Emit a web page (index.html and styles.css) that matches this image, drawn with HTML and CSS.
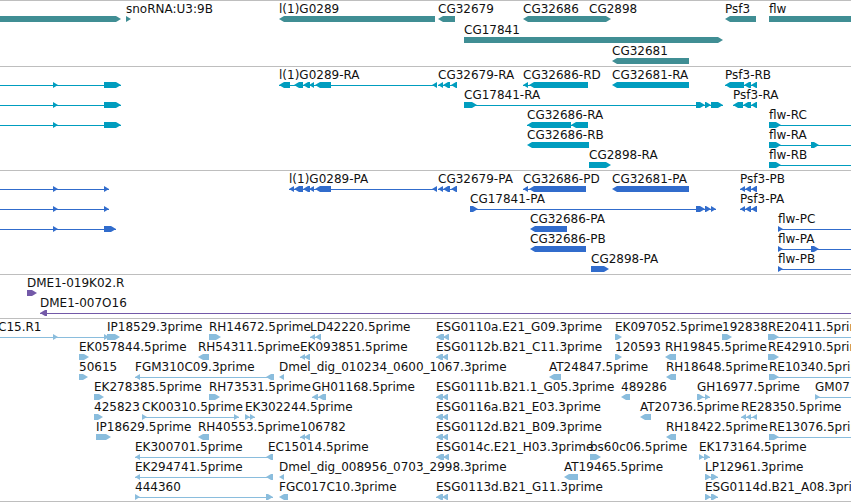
FILE: index.html
```
<!DOCTYPE html>
<html lang="en">
<head>
    <meta charset="UTF-8">
    <meta name="viewport" content="width=device-width, initial-scale=1.0">
    <title>Genome Map</title>
    <link rel="stylesheet" href="styles.css">
</head>
<body>
    <main class="map" id="map"></main>

    <script>
        // feature: [label, strand, [start, end, start, end, ...]]
        const tracks = [
            {
                type: 'gene',
                rows: [
                    [
                        ['', '+', [-10, 121]],
                        ['snoRNA:U3:9B', '+', [126, 131]],
                        ['l(1)G0289', '-', [279, 435]],
                        ['CG32679', '-', [438, 455]],
                        ['CG32686', '-', [523, 589]],
                        ['CG2898', '+', [589, 611]],
                        ['Psf3', '-', [725, 756]],
                        ['flw', '+', [769, 900]]
                    ],
                    [
                        ['CG17841', '+', [464, 723]]
                    ],
                    [
                        ['CG32681', '-', [612, 689]]
                    ]
                ]
            },
            {
                type: 'transcript',
                rows: [
                    [
                        ['', '+', [-10, -5, 53, 58, 104, 121]],
                        ['l(1)G0289-RA', '-', [279, 290, 294, 303, 303, 310, 309, 314, 315, 331, 432, 437]],
                        ['CG32679-RA', '-', [438, 443, 443, 450, 451, 457]],
                        ['CG32686-RD', '-', [523, 528, 529, 588]],
                        ['CG32681-RA', '-', [612, 689]],
                        ['Psf3-RB', '-', [725, 744, 744, 751, 751, 757]]
                    ],
                    [
                        ['', '+', [-10, -5, 53, 58, 104, 121]],
                        ['CG17841-RA', '+', [464, 477, 696, 705, 705, 711, 711, 723]],
                        ['Psf3-RA', '-', [733, 743, 743, 751, 751, 757]]
                    ],
                    [
                        ['', '+', [-10, -5, 53, 58, 104, 121]],
                        ['CG32686-RA', '-', [527, 571, 571, 588]],
                        ['flw-RC', '+', [769, 781, 900, 910]]
                    ],
                    [
                        ['CG32686-RB', '-', [527, 589]],
                        ['flw-RA', '+', [769, 781, 811, 819, 900, 910]]
                    ],
                    [
                        ['CG2898-RA', '+', [589, 611]],
                        ['flw-RB', '+', [769, 781, 900, 910]]
                    ]
                ]
            },
            {
                type: 'cds',
                rows: [
                    [
                        ['', '+', [-10, -5, 53, 58, 104, 109]],
                        ['l(1)G0289-PA', '-', [289, 294, 294, 303, 303, 310, 309, 314, 315, 331, 432, 437]],
                        ['CG32679-PA', '-', [438, 443, 443, 450, 451, 457]],
                        ['CG32686-PD', '-', [523, 528, 529, 586]],
                        ['CG32681-PA', '-', [612, 689]],
                        ['Psf3-PB', '-', [740, 745, 745, 751, 751, 757]]
                    ],
                    [
                        ['', '+', [-10, -5, 53, 58, 104, 109]],
                        ['CG17841-PA', '+', [470, 478, 696, 705, 705, 711, 711, 716]],
                        ['Psf3-PA', '-', [740, 745, 745, 751, 751, 757]]
                    ],
                    [
                        ['', '+', [-10, -5, 53, 58, 104, 116]],
                        ['CG32686-PA', '-', [530, 567]],
                        ['flw-PC', '+', [778, 783, 900, 910]]
                    ],
                    [
                        ['CG32686-PB', '-', [530, 586]],
                        ['flw-PA', '+', [778, 783, 811, 819, 900, 910]]
                    ],
                    [
                        ['CG2898-PA', '+', [591, 609]],
                        ['flw-PB', '+', [778, 783, 900, 910]]
                    ]
                ]
            },
            {
                type: 'clone',
                rows: [
                    [
                        ['DME1-019K02.R', '+', [27, 37]]
                    ],
                    [
                        ['DME1-007O16', '-', [40, 47, 900, 910]]
                    ]
                ]
            },
            {
                type: 'est',
                rows: [
                    [
                        ['C15.R1', '+', [-2, -1, 53, 58, 104, 109]],
                        ['IP18529.3prime', '+', [107, 120]],
                        ['RH14672.5prime', '+', [209, 221]],
                        ['LD42220.5prime', '-', [310, 315, 315, 321]],
                        ['ESG0110a.E21_G09.3prime', '-', [436, 444, 443, 449]],
                        ['EK097052.5prime', '+', [615, 622]],
                        ['192838', '+', [722, 732]],
                        ['RE20411.5prime', '+', [768, 779, 900, 910]]
                    ],
                    [
                        ['EK057844.5prime', '+', [79, 89]],
                        ['RH54311.5prime', '-', [198, 209]],
                        ['EK093851.5prime', '-', [300, 305, 304, 310]],
                        ['ESG0112b.B21_C11.3prime', '-', [436, 443, 442, 448]],
                        ['120593', '+', [615, 622]],
                        ['RH19845.5prime', '-', [665, 676]],
                        ['RE42910.5prime', '+', [768, 779]]
                    ],
                    [
                        ['50615', '+', [79, 88]],
                        ['FGM310C09.3prime', '-', [135, 140, 266, 274]],
                        ['Dmel_dig_010234_0600_1067.3prime', '-', [279, 284]],
                        ['AT24847.5prime', '-', [549, 561]],
                        ['RH18648.5prime', '-', [666, 676]],
                        ['RE10340.5prime', '+', [769, 779, 900, 910]]
                    ],
                    [
                        ['EK278385.5prime', '+', [94, 104]],
                        ['RH73531.5prime', '+', [209, 220]],
                        ['GH01168.5prime', '-', [312, 318, 318, 326]],
                        ['ESG0111b.B21.1_G05.3prime', '-', [436, 443, 442, 448]],
                        ['489286', '-', [621, 630]],
                        ['GH16977.5prime', '+', [697, 704, 705, 710]],
                        ['GM07', '+', [815, 820, 900, 910]]
                    ],
                    [
                        ['425823', '+', [94, 103]],
                        ['CK00310.5prime', '+', [142, 147, 234, 239]],
                        ['EK302244.5prime', '+', [245, 250, 250, 255]],
                        ['ESG0116a.B21_E03.3prime', '-', [436, 443, 442, 448]],
                        ['AT20736.5prime', '-', [640, 651]],
                        ['RE28350.5prime', '-', [741, 746, 746, 751, 752, 757]]
                    ],
                    [
                        ['IP18629.5prime', '+', [96, 111]],
                        ['RH40553.5prime', '-', [198, 209]],
                        ['106782', '-', [300, 305, 304, 310]],
                        ['ESG0112d.B21_B09.3prime', '-', [436, 443, 442, 448]],
                        ['RH18422.5prime', '-', [666, 676]],
                        ['RE13076.5prime', '+', [769, 779, 900, 910]]
                    ],
                    [
                        ['EK300701.5prime', '-', [135, 140, 266, 273]],
                        ['EC15014.5prime', '-', [268, 273]],
                        ['ESG014c.E21_H03.3prime', '-', [436, 444, 443, 449]],
                        ['bs60c06.5prime', '+', [590, 601]],
                        ['EK173164.5prime', '+', [699, 704, 704, 710]]
                    ],
                    [
                        ['EK294741.5prime', '-', [135, 140, 266, 273]],
                        ['Dmel_dig_008956_0703_2998.3prime', '-', [279, 284]],
                        ['AT19465.5prime', '-', [564, 578]],
                        ['LP12961.3prime', '+', [705, 711, 711, 718]]
                    ],
                    [
                        ['444360', '+', [135, 140, 266, 273]],
                        ['FGC017C10.3prime', '-', [279, 288]],
                        ['ESG0113d.B21_G11.3prime', '-', [436, 443, 442, 448]],
                        ['ESG0114d.B21_A08.3prime', '+', [705, 711, 711, 718]]
                    ]
                ]
            }
        ];

        const BASELINE = 12;
        const TOP = 15;
        const MIDDLE = 18;
        const BOTTOM = 21;
        const HEAD = 5;

        function svg(name, attrs, parent) {
            const el = document.createElementNS('http://www.w3.org/2000/svg', name);
            for (const key in attrs) {
                el.setAttribute(key, attrs[key]);
            }
            parent.appendChild(el);
            return el;
        }

        // block with its arrow head on the side of the strand
        function blockPoints(start, end, strand) {
            const head = Math.min(HEAD, end - start);
            if (strand === '+') {
                return `${start},${TOP} ${end - head},${TOP} ${end},${MIDDLE} ${end - head},${BOTTOM} ${start},${BOTTOM}`;
            }
            return `${end},${TOP} ${start + head},${TOP} ${start},${MIDDLE} ${start + head},${BOTTOM} ${end},${BOTTOM}`;
        }

        function drawFeature(row, [label, strand, blocks]) {
            const group = svg('g', {}, row);
            const start = blocks[0];
            const end = blocks[blocks.length - 1];

            if (blocks.length > 2) {
                svg('rect', { x: start, y: MIDDLE, width: end - start, height: 1 }, group);
            }
            for (let i = 0; i < blocks.length; i += 2) {
                svg('polygon', { points: blockPoints(blocks[i], blocks[i + 1], strand) }, group);
            }
            if (label) {
                svg('text', { class: 'label', x: start, y: BASELINE }, group).textContent = label;
            }
        }

        const map = document.getElementById('map');
        tracks.forEach(track => {
            const section = document.createElement('section');
            section.className = `track ${track.type}`;
            map.appendChild(section);
            track.rows.forEach(features => {
                const row = svg('svg', { class: 'row' }, section);
                features.forEach(feature => drawFeature(row, feature));
            });
        });
    </script>
</body>
</html>
```
FILE: styles.css
```
* {
    margin: 0;
    padding: 0;
    box-sizing: border-box;
}

body {
    font-family: 'DejaVu Sans', sans-serif;
    font-size: 12px;
    background-color: #ffffff;
    color: #111111;
}

.map {
    border-bottom: 1px solid #bebebe;
    overflow: hidden;
}

.track {
    border-top: 1px solid #bebebe;
    padding-bottom: 3px;
}

.track:first-child,
.track:last-child {
    padding-bottom: 2px;
}

.row {
    display: block;
    width: 100%;
    height: 20px;
    overflow: visible;
}

.label {
    fill: #111111;
}

.gene {
    fill: #408e94;
}

.gene .row {
    height: 21px;
}

.transcript {
    fill: #009dbf;
}

.cds {
    fill: #316ccc;
}

.clone {
    fill: #7359a8;
}

.est {
    fill: #8abddd;
}
```
